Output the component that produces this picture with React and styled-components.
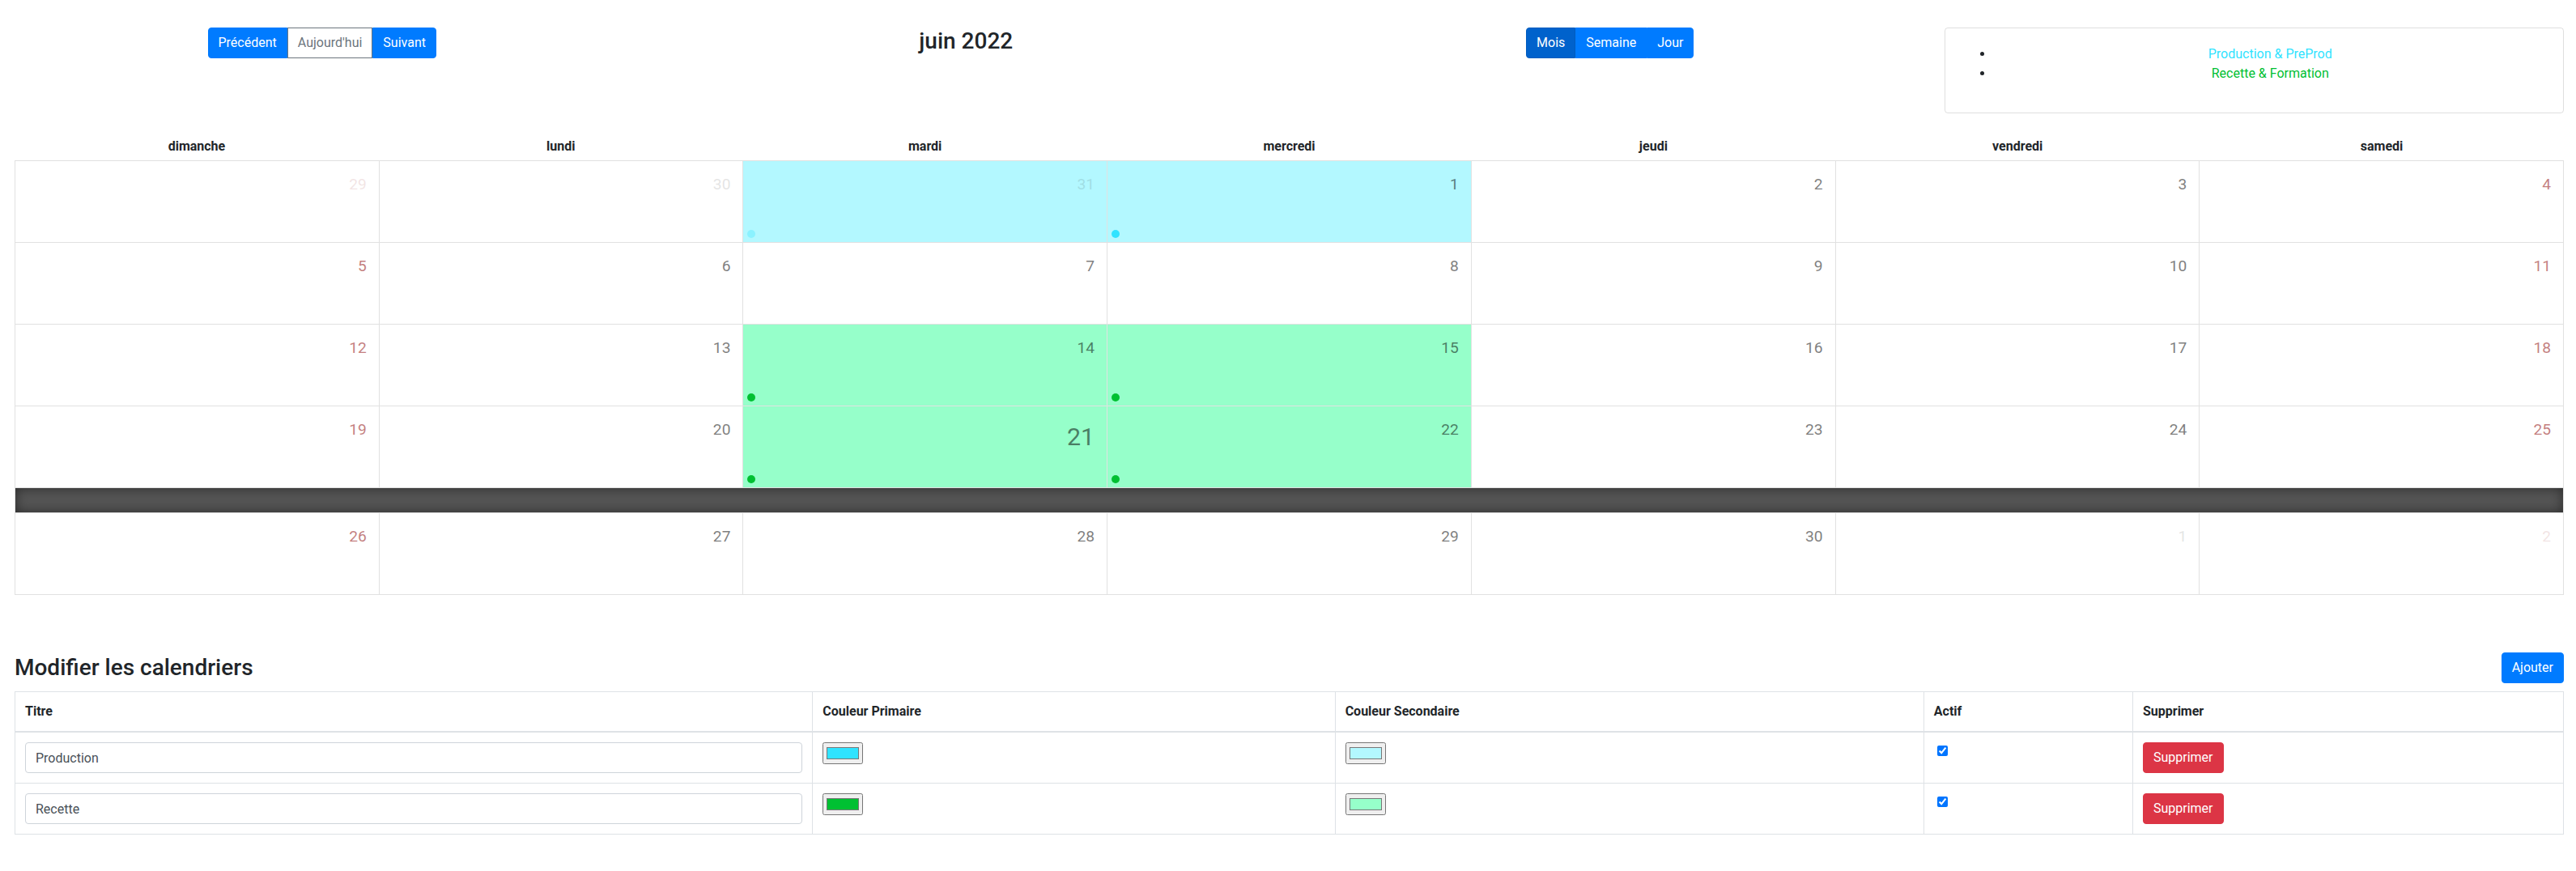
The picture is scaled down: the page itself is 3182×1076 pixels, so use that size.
import React from 'react';
import styled, { createGlobalStyle, css } from 'styled-components';

const GlobalStyle = createGlobalStyle`
  body {
    margin: 0;
    font-family: "Segoe UI", Roboto, "Noto Sans", "Liberation Sans", sans-serif;
    font-size: 16px;
    line-height: 1.5;
    color: #212529;
    background: #fff;
  }
  * { box-sizing: border-box; }
`;

const PRIMARY_BLUE = '#30e3ff';
const SECONDARY_BLUE = '#b3f8ff';
const PRIMARY_GREEN = '#00c032';
const SECONDARY_GREEN = '#96ffca';

const Page = styled.div`
  padding: 34px 15px 40px 18px;
`;

// row of four bootstrap-like columns, bleeding to the window edges
const Toolbar = styled.div`
  display: grid;
  grid-template-columns: repeat(4, 1fr);
  align-items: start;
  margin: 0 -15px 24px -18px;
`;

const ToolbarCol = styled.div`
  display: flex;
  justify-content: center;
  padding: 0 15px;
`;

const Title = styled.h3`
  margin: 0;
  font-size: 28px;
  font-weight: 500;
  line-height: 1.2;
`;

const BtnGroup = styled.div`
  display: inline-flex;
  & > button:not(:first-child) {
    border-top-left-radius: 0;
    border-bottom-left-radius: 0;
  }
  & > button:not(:last-child) {
    border-top-right-radius: 0;
    border-bottom-right-radius: 0;
  }
`;

const variants = {
  primary: css`
    color: #fff;
    background: #007bff;
    border-color: #007bff;
  `,
  active: css`
    color: #fff;
    background: #0062cc;
    border-color: #005cbf;
  `,
  outline: css`
    color: #6c757d;
    background: #fff;
    border-color: #6c757d;
  `,
  danger: css`
    color: #fff;
    background: #dc3545;
    border-color: #dc3545;
  `,
};

const Button = styled.button`
  font-family: inherit;
  font-size: 16px;
  line-height: 1.5;
  padding: 6px 12px;
  border: 1px solid transparent;
  border-radius: 4px;
  cursor: pointer;
  white-space: nowrap;
  ${(p) => variants[p.$variant || 'primary']}
`;

const Legend = styled.div`
  width: 100%;
  border: 1px solid rgba(0, 0, 0, 0.125);
  border-radius: 4px;
  padding: 20px;
`;

const LegendList = styled.ul`
  margin: 0 0 16px;
  padding-left: 40px;
`;

const LegendItem = styled.li`
  text-align: center;
  color: ${(p) => p.$color};
  &::marker { color: #212529; }
`;

const Month = styled.div``;

const HeaderRow = styled.div`
  display: flex;
`;

const HeaderCell = styled.div`
  flex: 1;
  padding: 5px 0;
  text-align: center;
  font-weight: 700;
  white-space: nowrap;
  overflow: hidden;
`;

const Days = styled.div`
  border: 1px solid #e1e1e1;
  border-bottom: 0;
`;

const Week = styled.div`
  display: flex;
  border-bottom: 1px solid #e1e1e1;
`;

const DayCell = styled.div`
  flex: 1;
  min-width: 0;
  min-height: 100px;
  display: flex;
  flex-direction: column;
  background: ${(p) => p.$bg || 'transparent'};
  &:not(:last-child) { border-right: 1px solid #e1e1e1; }
`;

const CellTop = styled.div`
  flex: 1;
  min-height: 78px;
  display: flex;
  justify-content: flex-end;
  align-items: flex-start;
`;

const DayNumber = styled.span`
  font-size: ${(p) => (p.$today ? '30.4px' : '19.2px')};
  line-height: 1.5;
  font-weight: 400;
  margin: 15px 15px 10px 0;
  color: ${(p) => (p.$weekend ? '#8b0000' : '#000')};
  opacity: ${(p) => (p.$out ? 0.1 : 0.5)};
`;

const Events = styled.div`
  display: flex;
  flex-wrap: wrap;
  align-items: flex-end;
  margin: 3px;
  line-height: 10px;
`;

const EventDot = styled.span`
  width: 10px;
  height: 10px;
  border-radius: 50%;
  margin: 2px;
  display: inline-block;
  background: ${(p) => p.$color};
  opacity: ${(p) => (p.$out ? 0.3 : 1)};
`;

const OpenDay = styled.div`
  padding: 15px;
  background: #555;
  color: #fff;
  border-bottom: 1px solid #e1e1e1;
  box-shadow: inset 0 0 15px 0 rgba(0, 0, 0, 0.5);
`;

const SectionHead = styled.div`
  display: flex;
  justify-content: space-between;
  align-items: center;
  margin-top: 71px;
  margin-bottom: 10px;
`;

const SectionTitle = styled.h3`
  margin: 0;
  font-size: 28px;
  font-weight: 500;
  line-height: 1.2;
`;

const Table = styled.table`
  width: 100%;
  border-collapse: collapse;
  border: 1px solid #dee2e6;
`;

const Th = styled.th`
  width: ${(p) => p.$w};
  padding: 12px;
  text-align: left;
  vertical-align: bottom;
  font-weight: 700;
  border: 1px solid #dee2e6;
  border-bottom-width: 2px;
`;

const Td = styled.td`
  padding: 12px;
  vertical-align: top;
  border: 1px solid #dee2e6;
`;

const TextInput = styled.input`
  display: block;
  width: 100%;
  height: 38px;
  padding: 6px 12px;
  font-family: inherit;
  font-size: 16px;
  line-height: 1.5;
  color: #495057;
  background: #fff;
  border: 1px solid #ced4da;
  border-radius: 4px;
`;

const ColorInput = styled.input`
  margin: 0;
`;

const Check = styled.input`
  margin: 4px 3px 3px 4px;
`;

const dayNames = ['dimanche', 'lundi', 'mardi', 'mercredi', 'jeudi', 'vendredi', 'samedi'];

const blue = { bg: SECONDARY_BLUE, dot: PRIMARY_BLUE };
const green = { bg: SECONDARY_GREEN, dot: PRIMARY_GREEN };

const weeks = [
  [{ d: 29, out: true }, { d: 30, out: true }, { d: 31, out: true, ...blue }, { d: 1, ...blue }, { d: 2 }, { d: 3 }, { d: 4 }],
  [{ d: 5 }, { d: 6 }, { d: 7 }, { d: 8 }, { d: 9 }, { d: 10 }, { d: 11 }],
  [{ d: 12 }, { d: 13 }, { d: 14, ...green }, { d: 15, ...green }, { d: 16 }, { d: 17 }, { d: 18 }],
  [{ d: 19 }, { d: 20 }, { d: 21, today: true, ...green }, { d: 22, ...green }, { d: 23 }, { d: 24 }, { d: 25 }],
  [{ d: 26 }, { d: 27 }, { d: 28 }, { d: 29 }, { d: 30 }, { d: 1, out: true }, { d: 2, out: true }],
];

const calendars = [
  { title: 'Production', primary: PRIMARY_BLUE, secondary: SECONDARY_BLUE },
  { title: 'Recette', primary: PRIMARY_GREEN, secondary: SECONDARY_GREEN },
];

function WeekRow({ days }) {
  return (
    <Week>
      {days.map((day, i) => (
        <DayCell key={i} $bg={day.bg}>
          <CellTop>
            <DayNumber $out={day.out} $today={day.today} $weekend={i === 0 || i === 6}>
              {day.d}
            </DayNumber>
          </CellTop>
          <Events>{day.dot && <EventDot $color={day.dot} $out={day.out} />}</Events>
        </DayCell>
      ))}
    </Week>
  );
}

export default function App() {
  return (
    <Page>
      <GlobalStyle />
      <Toolbar>
        <ToolbarCol>
          <BtnGroup>
            <Button>Précédent</Button>
            <Button $variant="outline">Aujourd'hui</Button>
            <Button>Suivant</Button>
          </BtnGroup>
        </ToolbarCol>
        <ToolbarCol>
          <Title>juin 2022</Title>
        </ToolbarCol>
        <ToolbarCol>
          <BtnGroup>
            <Button $variant="active">Mois</Button>
            <Button>Semaine</Button>
            <Button>Jour</Button>
          </BtnGroup>
        </ToolbarCol>
        <ToolbarCol>
          <Legend>
            <LegendList>
              <LegendItem $color={PRIMARY_BLUE}>Production &amp; PreProd</LegendItem>
              <LegendItem $color={PRIMARY_GREEN}>Recette &amp; Formation</LegendItem>
            </LegendList>
          </Legend>
        </ToolbarCol>
      </Toolbar>

      <Month>
        <HeaderRow>
          {dayNames.map((n) => (
            <HeaderCell key={n}>{n}</HeaderCell>
          ))}
        </HeaderRow>
        <Days>
          {weeks.slice(0, 4).map((w, i) => (
            <WeekRow key={i} days={w} />
          ))}
          <OpenDay />
          <WeekRow days={weeks[4]} />
        </Days>
      </Month>

      <SectionHead>
        <SectionTitle>Modifier les calendriers</SectionTitle>
        <Button>Ajouter</Button>
      </SectionHead>

      <Table>
        <thead>
          <tr>
            <Th $w="31.3%">Titre</Th>
            <Th $w="20.5%">Couleur Primaire</Th>
            <Th $w="23.1%">Couleur Secondaire</Th>
            <Th $w="8.2%">Actif</Th>
            <Th $w="16.9%">Supprimer</Th>
          </tr>
        </thead>
        <tbody>
          {calendars.map((c) => (
            <tr key={c.title}>
              <Td>
                <TextInput type="text" defaultValue={c.title} />
              </Td>
              <Td>
                <ColorInput type="color" defaultValue={c.primary} />
              </Td>
              <Td>
                <ColorInput type="color" defaultValue={c.secondary} />
              </Td>
              <Td>
                <Check type="checkbox" defaultChecked />
              </Td>
              <Td>
                <Button $variant="danger">Supprimer</Button>
              </Td>
            </tr>
          ))}
        </tbody>
      </Table>
    </Page>
  );
}
